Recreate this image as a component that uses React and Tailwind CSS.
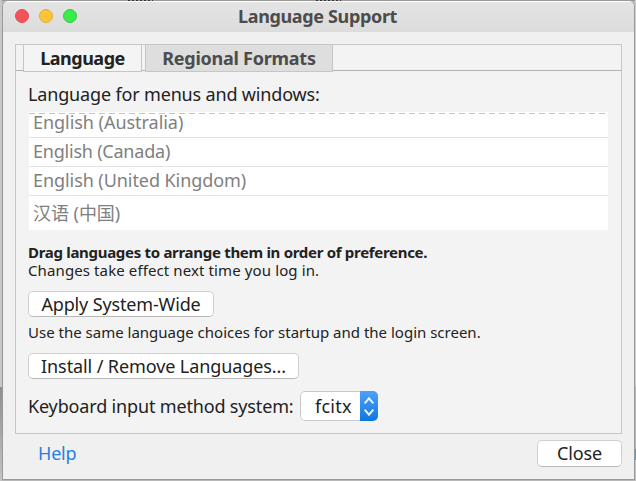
const rows = [
  { name: 'English (Australia)', cls: 'h-[24px] pb-[7px] border-b border-[#e2e2e2] tracking-[-0.04px]' },
  { name: 'English (Canada)', cls: 'h-[29px] pb-[2px] border-b border-[#e2e2e2] tracking-[-0.22px]' },
  { name: 'English (United Kingdom)', cls: 'h-[29px] pb-[2px] border-b border-[#e2e2e2] tracking-[-0.07px]' },
  { name: '汉语 (中国)', cls: 'h-[34px] pb-px tracking-[-0.05px]' },
];

const button =
  'flex items-center justify-center rounded-[5px] border border-[#d0d0d0] border-b-[#b8b8b8] bg-white text-[18px] whitespace-nowrap';

function TitleBar() {
  return (
    <div className="flex h-[31px] shrink-0 items-center border-t border-white bg-linear-to-b from-[#e4e4e4] to-[#dcdcdc] pl-[12px]">
      <div className="flex gap-[10px] pb-[2px]">
        <span className="size-[14px] rounded-full border border-[#e34e54] bg-[#f45259]" />
        <span className="size-[14px] rounded-full border border-[#e0ae38] bg-[#fcc436]" />
        <span className="size-[14px] rounded-full border border-[#32ca42] bg-[#38ec4a]" />
      </div>
      <h1 className="ml-[161px] pb-px text-[18px] font-bold tracking-[-0.35px] whitespace-nowrap text-[#4c4c4c]">Language Support</h1>
    </div>
  );
}

function Tabs() {
  return (
    <div className="flex h-[27px] items-start">
      <div className="h-[26px] w-[7px] border-b border-[#b2b2b2]" />
      <div className="flex h-[27px] w-[119px] items-center justify-center border-x border-b border-[#c6c6c6] bg-[#f4f4f4] text-[18px] font-bold tracking-[-0.5px]">Language</div>
      <div className="h-[26px] w-[3px] border-b border-[#b2b2b2]" />
      <div className="flex h-[27px] w-[188px] items-center justify-center border-x border-b border-[#c6c6c6] bg-[#dedede] text-[18px] font-bold tracking-[-0.25px] whitespace-nowrap text-[#4c4c4c]">Regional Formats</div>
      <div className="h-[26px] flex-1 border-b border-[#b2b2b2]" />
    </div>
  );
}

export default function App() {
  return (
    <div className="flex h-[481px] w-[636px] overflow-hidden bg-[#b8b8b8] font-['Noto_Sans','Noto_Sans_CJK_SC',sans-serif] text-[#222]">
      <div className="flex w-[2px] flex-col">
        <div className="h-[387px] bg-[#c8c8c8]" />
        <div className="flex-1 bg-linear-to-b from-[#8e8e8e] to-[#c4c4c4]" />
      </div>
      <div className="flex w-[633px] flex-col">
        <div className="flex h-px bg-[#999]">
          <div className="ml-[126px] w-[25px] bg-[repeating-linear-gradient(90deg,#333_0_2px,#999_2px_4px)]" />
          <div className="ml-[163px] w-[25px] bg-[repeating-linear-gradient(90deg,#333_0_2px,#999_2px_4px)]" />
        </div>
        <div className="flex h-[479px] flex-col overflow-hidden rounded-t-[6px] border-x border-b border-[#999] bg-[#f0f0f0]">
          <TitleBar />
          <div className="mt-[12px] ml-[12px] h-[390px] w-[607px] shrink-0 border border-[#c6c6c6] bg-[#f3f3f3]">
            <Tabs />
            <div className="flex flex-col items-start pl-[12px]">
              <p className="mt-[10px] h-[24px] text-[18px] leading-[24px] tracking-[-0.16px] whitespace-nowrap">Language for menus and windows:</p>
              <div className="mt-[6px] ml-px w-[579px] bg-white">
                <div className="h-[2px] w-full bg-[repeating-linear-gradient(90deg,#c4c4c4_0_6px,transparent_6px_10px)] bg-[length:100%_1px] bg-bottom bg-no-repeat" />
                {rows.map((row) => (
                  <div key={row.name} className={`flex items-center pl-[4px] text-[18px] leading-[24px] text-[#808080] ${row.cls}`}>{row.name}</div>
                ))}
              </div>
              <p className="mt-[13px] h-[18px] text-[15px] leading-[18px] font-bold tracking-[-0.3px] whitespace-nowrap">Drag languages to arrange them in order of preference.</p>
              <p className="h-[18px] text-[15px] leading-[18px] tracking-[0.11px] whitespace-nowrap">Changes take effect next time you log in.</p>
              <button className={`mt-[12px] h-[26px] w-[186px] tracking-[-0.15px] ${button}`}>Apply System-Wide</button>
              <p className="mt-[6px] h-[18px] text-[15px] leading-[18px] whitespace-nowrap">Use the same language choices for startup and the login screen.</p>
              <button className={`mt-[12px] h-[26px] w-[271px] tracking-[-0.1px] ${button}`}>Install / Remove Languages...</button>
              <div className="mt-[12px] flex h-[30px] items-center">
                <span className="w-[272px] text-[18px] tracking-[-0.16px] whitespace-nowrap">Keyboard input method system:</span>
                <button className="flex h-[30px] w-[78px] overflow-hidden rounded-[5px]">
                  <span className="flex h-full w-[60px] items-center rounded-l-[5px] border border-r-0 border-[#c8c8c8] bg-white pl-[14px] text-[18px] tracking-[0.25px]">fcitx</span>
                  <span className="flex h-full w-[18px] items-center justify-center bg-linear-to-b from-[#4ba0fb] to-[#0878df]">
                    <svg width="18" height="30" viewBox="0 0 18 30" fill="none" stroke="#e8f2ff" strokeWidth="2">
                      <path d="M4.7 12.4 9 7.4l4.3 5M4.7 18.6 9 23.6l4.3-5" />
                    </svg>
                  </span>
                </button>
              </div>
            </div>
          </div>
          <div className="mt-[6px] flex h-[27px] w-[619px] items-center justify-between pl-[35px]">
            <a className="text-[18px] tracking-[-0.2px] text-[#2a7de1]">Help</a>
            <button className={`h-[27px] w-[85px] tracking-[-0.1px] ${button}`}>Close</button>
          </div>
        </div>
      </div>
      <div className="flex w-px flex-col">
        <div className="h-[387px] bg-[#d0d0d0]" />
        <div className="h-[62px] bg-[#b4b4b4]" />
        <div className="h-[11px] bg-[#5b9cc4]" />
        <div className="flex-1 bg-[#c4c4c4]" />
      </div>
    </div>
  );
}
